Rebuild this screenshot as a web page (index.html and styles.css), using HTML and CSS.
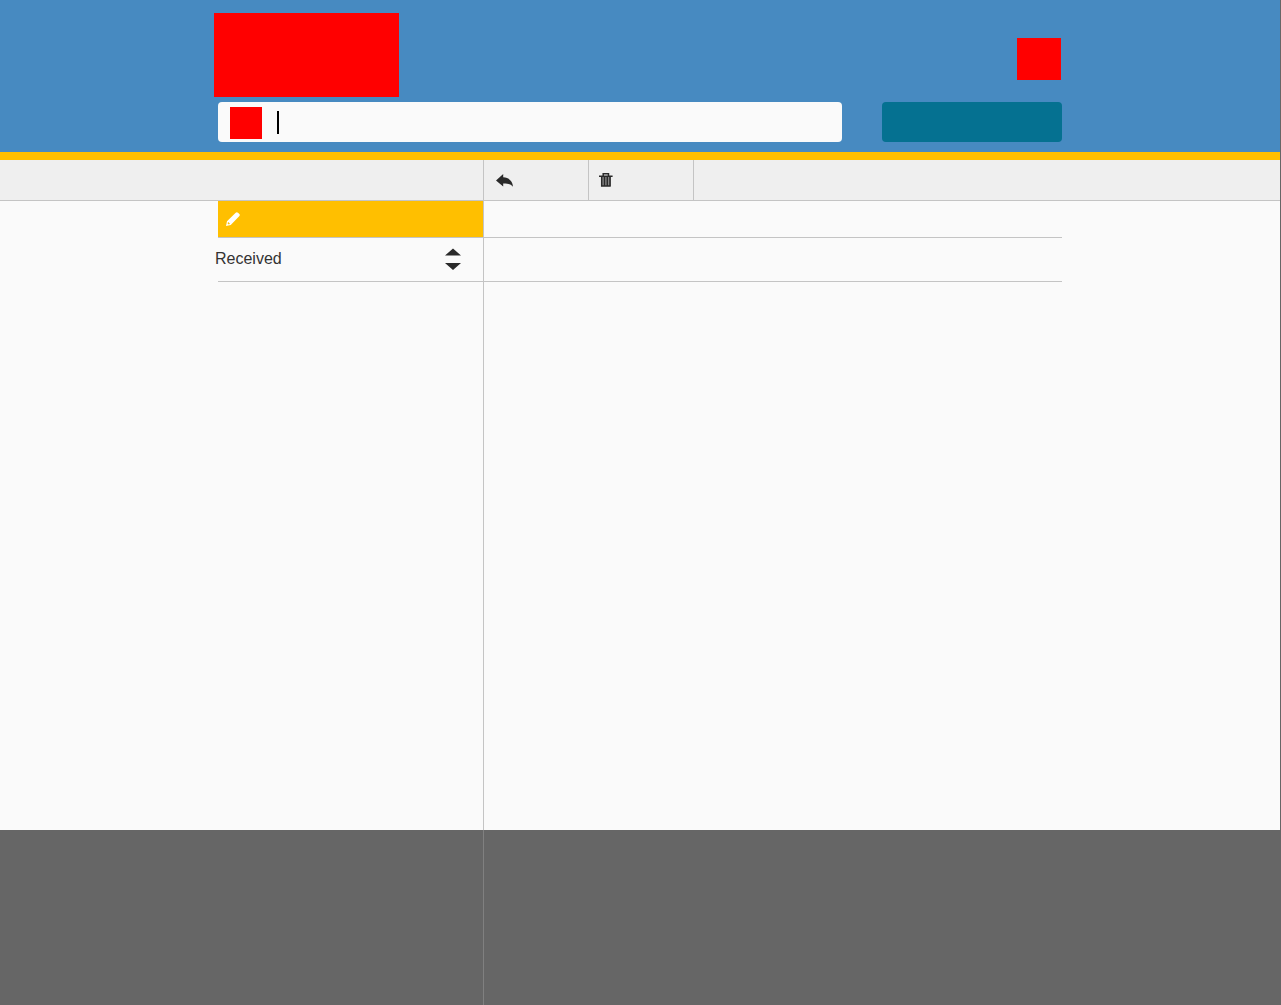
FILE: index.html
```html
<!DOCTYPE html>
<html lang="en">
<head>
<meta charset="utf-8">
<meta name="viewport" content="width=device-width, initial-scale=1">
<title>Mail</title>
<link rel="stylesheet" href="styles.css">
</head>
<body>
<div class="page">
  <header class="header">
    <div class="container">
      <div class="brand-row">
        <a class="logo" href="#" aria-label="Home"></a>
        <a class="account" href="#" aria-label="Account"></a>
      </div>
      <form class="search-row">
        <div class="search">
          <span class="search-icon"></span>
          <span class="caret"></span>
          <input class="search-input" type="text" aria-label="Search">
        </div>
        <button class="search-button" type="button" aria-label="Search mail"></button>
      </form>
    </div>
  </header>
  <div class="toolbar">
    <div class="container actions">
      <button class="action" type="button" aria-label="Reply">
        <svg class="icon" width="18" height="14" viewBox="0 0 18 14"><path fill="#2a2a2a" d="M0 7.400 7.200 1V4.300C13 4.500 16.600 8 17 13.800 14.800 11.200 11.500 10.300 7.200 10.400V13.500Z"/></svg>
      </button>
      <button class="action" type="button" aria-label="Delete">
        <svg class="icon" width="14" height="14" viewBox="0 0 14 14"><path fill="#888" d="M2 4H12V13H2Z"/><path fill="none" stroke="#2a2a2a" stroke-width="1.500" d="M4.200 3V.8H9.500V3M0 3.200H13.600M2.700 4V13H11V4M5.500 4V12.500M8.300 4V12.500"/></svg>
      </button>
    </div>
  </div>
  <main class="main">
    <div class="container columns">
      <aside class="sidebar">
        <button class="compose" type="button" aria-label="Compose">
          <svg width="14" height="14" viewBox="0 0 14 14"><path fill="#fff" fill-rule="evenodd" d="M0 14 1 9.300 9.700.7Q10.800-.4 12 .7L13.300 2Q14.400 3.200 13.200 4.300L4.700 13ZM1.500 11.200 2.800 12.500 4 11.800 2.200 10Z"/></svg>
        </button>
        <div class="folder">
          <select class="folder-select" aria-label="Folder"><option>Received</option></select>
          <svg class="sort" width="16" height="22" viewBox="0 0 16 22"><path fill="#2a2a2a" d="M0 7.500 8 .5 16 7.500ZM0 15H16L8 22Z"/></svg>
        </div>
      </aside>
      <section class="content">
        <div class="content-title"></div>
        <div class="content-head"></div>
      </section>
    </div>
  </main>
</div>
<footer class="footer">
  <div class="container columns">
    <div class="sidebar"></div>
    <div class="content"></div>
  </div>
</footer>
</body>
</html>
```
FILE: styles.css
```css
* {
  box-sizing: border-box;
}

body {
  margin: 0;
  min-height: 100vh;
  padding-right: 1px;
  display: flex;
  flex-direction: column;
  background: #666;
  color: #333;
  font: 16px/20px "Liberation Sans", Arial, sans-serif;
}

button,
input,
select {
  margin: 0;
  padding: 0;
  border: 0;
  border-radius: 0;
  background: none;
  color: inherit;
  font: inherit;
}

.container {
  width: 100%;
  max-width: 844px;
  margin: 0 auto;
}

.page {
  flex: 1;
  display: flex;
  flex-direction: column;
  background: #fafafa;
}

.header {
  padding: 13px 0 10px;
  background: #478ac1;
  border-bottom: 8px solid #ffbf00;
}

.brand-row {
  display: flex;
  justify-content: space-between;
  align-items: center;
  margin: 0 1px 5px -4px;
}

.logo {
  width: 185px;
  height: 84px;
  background: #f00;
}

.account {
  width: 44px;
  height: 42px;
  margin-top: 8px;
  background: #f00;
}

.account:hover,
.logo:hover {
  opacity: .9;
}

.search-row {
  display: flex;
  gap: 40px;
}

.search {
  position: relative;
  flex: 1;
  display: flex;
  align-items: center;
  height: 40px;
  padding: 0 12px;
  background: #fafafa;
  border-radius: 4px;
}

.search-icon {
  width: 32px;
  height: 32px;
  margin-top: 2px;
  background: #f00;
}

.caret {
  position: absolute;
  left: 59px;
  top: 9px;
  width: 2px;
  height: 23px;
  background: #000;
}

.search-input {
  flex: 1;
  min-width: 0;
  height: 40px;
  padding-left: 16px;
  outline: none;
}

.search-button {
  width: 180px;
  height: 40px;
  background: #057191;
  border-radius: 4px;
}

.toolbar {
  background: #efefef;
  border-bottom: 1px solid #c4c4c4;
}

.actions {
  display: flex;
  padding-left: 265px;
}

.action {
  display: flex;
  align-items: center;
  width: 105px;
  height: 40px;
  padding-left: 10px;
  border-left: 1px solid #c4c4c4;
}

.action:first-child {
  padding-left: 12px;
}

.action:last-child {
  width: 106px;
  border-right: 1px solid #c4c4c4;
}

.main {
  flex: 1;
  display: flex;
}

.columns {
  display: flex;
}

.sidebar {
  width: 265px;
}

.content {
  flex: 1;
  border-left: 1px solid #c4c4c4;
}

.compose {
  display: flex;
  align-items: center;
  width: 100%;
  height: 36px;
  padding-left: 8px;
  background: #ffbf00;
}

.folder {
  position: relative;
  height: 45px;
  border: solid #c4c4c4;
  border-width: 1px 0;
}

.folder-select {
  width: 265px;
  height: 42px;
  margin-left: -3px;
  appearance: none;
}

.sort {
  position: absolute;
  right: 22px;
  top: 10px;
  pointer-events: none;
}

.content-title {
  height: 37px;
  border-bottom: 1px solid #c4c4c4;
}

.content-head {
  height: 44px;
  border-bottom: 1px solid #c4c4c4;
}

.footer {
  display: flex;
  height: 175px;
}

.footer .content {
  border-color: #808080;
}
```
